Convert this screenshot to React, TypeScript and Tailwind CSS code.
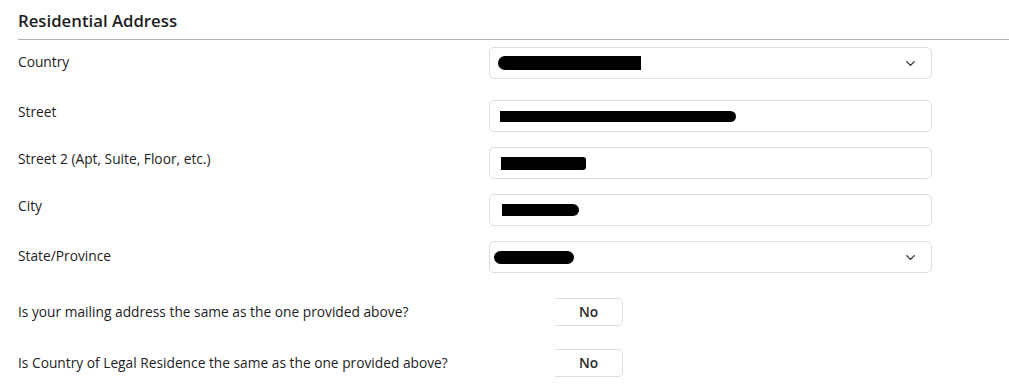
import { ChevronDown } from "lucide-react";

type Row = {
  label: string;
  kind: "select" | "input";
  blob: string;
  labelPad: string;
  gap: string;
};

const rows: Row[] = [
  { label: "Country", kind: "select", blob: "w-[143px] h-[14px] ml-[8px] rounded-l-full", labelPad: "pt-[6px]", gap: "mt-[7px]" },
  { label: "Street", kind: "input", blob: "w-[236px] h-[11px] ml-[10px] rounded-r-full", labelPad: "pt-[3px]", gap: "mt-[21px]" },
  { label: "Street 2 (Apt, Suite, Floor, etc.)", kind: "input", blob: "w-[85px] h-[13px] ml-[11px] rounded-r-[3px]", labelPad: "pt-[3px]", gap: "mt-[15px]" },
  { label: "City", kind: "input", blob: "w-[77px] h-[12px] ml-[12px] rounded-r-full", labelPad: "pt-[3px]", gap: "mt-[15px]" },
  { label: "State/Province", kind: "select", blob: "w-[80px] h-[13px] ml-[4px] rounded-full", labelPad: "pt-[6px]", gap: "mt-[15px]" },
];

const questions = [
  "Is your mailing address the same as the one provided above?",
  "Is Country of Legal Residence the same as the one provided above?",
];

function Field({ row }: { row: Row }) {
  return (
    <div className={`flex items-start ${row.gap}`}>
      <div className={`w-[471px] shrink-0 text-[13.75px] font-medium leading-[18px] ${row.labelPad}`}>{row.label}</div>
      <div className="flex h-[32px] w-[443px] items-center rounded-[5px] border border-[#dedede] bg-white">
        <span className={`block bg-black ${row.blob}`} />
        {row.kind === "select" ? (
          <ChevronDown className="ml-auto mr-[13px] h-[15px] w-[15px] text-[#333]" strokeWidth={2.2} />
        ) : null}
      </div>
    </div>
  );
}

export default function App() {
  return (
    <main
      className="min-h-screen bg-white pl-[18px] text-[#1d1d1d]"
      style={{ fontFamily: "'Open Sans', sans-serif" }}
    >
      <h2 className="pt-[10px] pb-[7px] text-[16.75px] font-semibold leading-[22px]">Residential Address</h2>
      <div className="h-px bg-[#b4b4b4]" />

      {rows.map((row) => (
        <Field key={row.label} row={row} />
      ))}

      <div className="mt-[25px] flex flex-col gap-[23px]">
        {questions.map((q) => (
          <div key={q} className="flex items-center">
            <div className="w-[537px] shrink-0 text-[13.75px] font-medium">{q}</div>
            <button
              type="button"
              className="h-[28px] w-[68px] rounded-r-[5px] border border-l-0 border-[#dedede] bg-white text-[13.75px] font-semibold text-[#2b2b2b]"
            >
              No
            </button>
          </div>
        ))}
      </div>
    </main>
  );
}
